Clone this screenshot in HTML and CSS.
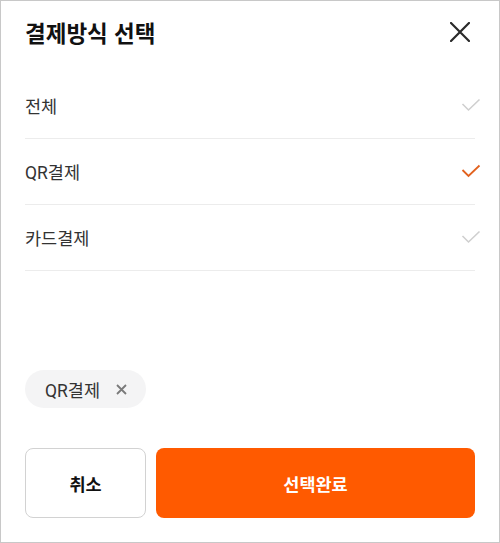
FILE: index.html
```html
<!DOCTYPE html>
<html lang="ko">
<head>
<meta charset="utf-8">
<link rel="stylesheet" href="styles.css">
</head>
<body>
<div class="sheet">
  <div class="header">
    <h1 class="title">결제방식 선택</h1>
    <svg class="close" width="20" height="20" viewBox="0 0 20 20"><path d="M1 1L19 19M19 1L1 19" stroke="#2a2a2a" stroke-width="2.2" fill="none" stroke-linecap="square"/></svg>
  </div>
  <ul class="list">
    <li class="row"><span class="label">전체</span><svg class="check" width="20" height="14" viewBox="0 0 20 14"><path d="M1.5 6L7.5 12L18.5 1.5" stroke="#cfcfcf" stroke-width="1.6" fill="none"/></svg></li>
    <li class="row"><span class="label">QR결제</span><svg class="check" width="20" height="14" viewBox="0 0 20 14"><path d="M1.5 6L7.5 12L18.5 1.5" stroke="#e2621f" stroke-width="1.8" fill="none"/></svg></li>
    <li class="row"><span class="label">카드결제</span><svg class="check" width="20" height="14" viewBox="0 0 20 14"><path d="M1.5 6L7.5 12L18.5 1.5" stroke="#cfcfcf" stroke-width="1.6" fill="none"/></svg></li>
  </ul>
  <div class="chips">
    <span class="chip">QR결제<svg class="chip-x" width="11" height="11" viewBox="0 0 11 11"><path d="M1 1L10 10M10 1L1 10" stroke="#7a7a7a" stroke-width="1.8" fill="none"/></svg></span>
  </div>
  <div class="actions">
    <button class="btn btn-cancel">취소</button>
    <button class="btn btn-confirm">선택완료</button>
  </div>
</div>
</body>
</html>
```
FILE: styles.css
```css
* { box-sizing: border-box; }
html, body { margin: 0; padding: 0; background: #fff; }
body { font-family: Roboto, "Noto Sans CJK KR", sans-serif; color: #333; }
.sheet {
  width: 500px;
  height: 543px;
  border: 1px solid #c8c8c8;
  padding: 0 24px;
  display: flex;
  flex-direction: column;
}
.header {
  height: 72px;
  padding-top: 15px;
  display: flex;
  justify-content: space-between;
  align-items: flex-start;
}
.title {
  margin: 0;
  font-size: 22.5px;
  line-height: 32px;
  font-weight: 700;
  color: #111;
  font-family: "Noto Sans CJK KR", sans-serif;
}
.close { margin-top: 6px; margin-right: 5px; }
.list { list-style: none; margin: 0; padding: 0; }
.row {
  height: 66px;
  border-bottom: 1px solid #ececec;
  display: flex;
  align-items: center;
  justify-content: space-between;
}
.label { font-size: 17.5px; color: #333; padding-bottom: 1px; }
.check { margin-right: -6px; margin-bottom: 2px; }
.chips { margin-top: 99px; display: flex; }
.chip {
  height: 38px;
  border-radius: 19px;
  background: #f4f4f5;
  padding: 0 19px 0 20px;
  display: flex;
  align-items: center;
  gap: 16px;
  font-size: 17.5px;
  color: #333;
}
.actions { margin-top: 40px; display: flex; gap: 10px; }
.btn {
  height: 70px;
  border-radius: 8px;
  font-family: "Noto Sans CJK KR", sans-serif;
  font-size: 17.5px;
  font-weight: 700;
  cursor: pointer;
}
.btn-cancel {
  width: 121px;
  background: #fff;
  border: 1px solid #d2d2d2;
  color: #111;
}
.btn-confirm {
  flex: 1;
  background: #ff5a00;
  border: none;
  color: #fff;
}
```
